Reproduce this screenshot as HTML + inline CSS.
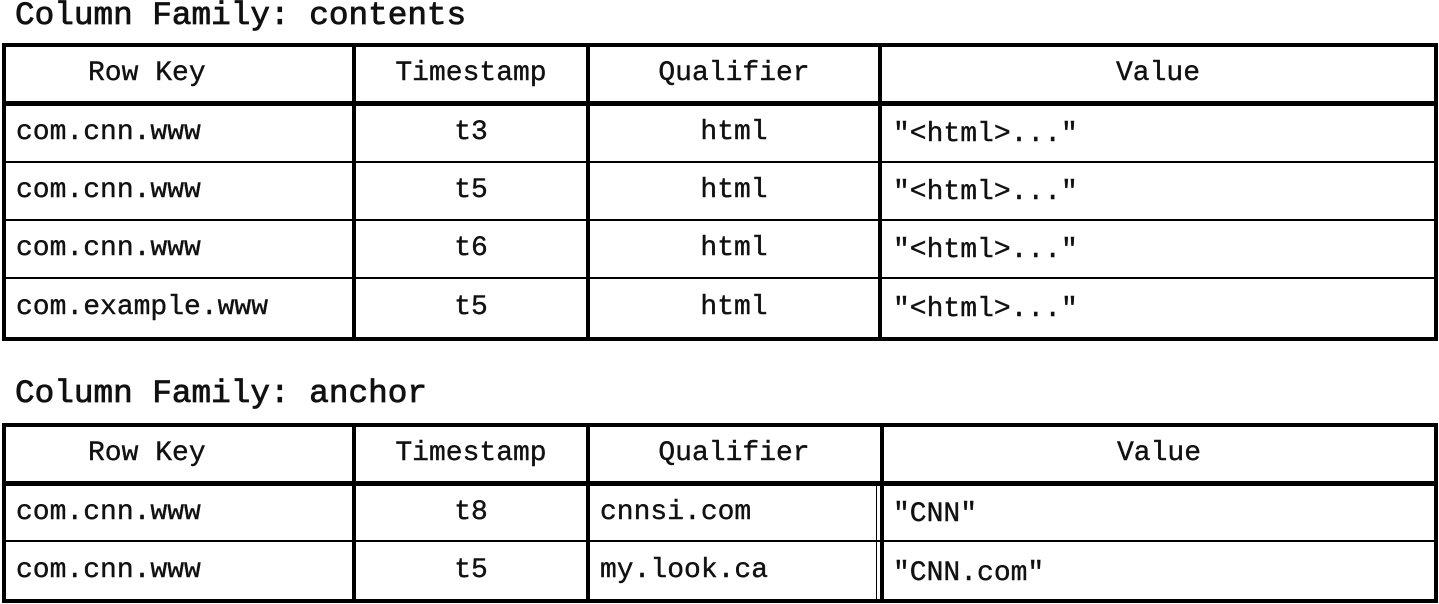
<!DOCTYPE html>
<html><head><meta charset="utf-8"><style>
body{margin:0;width:1439px;height:604px;background:#fff;position:relative;overflow:hidden;font-family:"Liberation Mono","DejaVu Sans Mono",monospace;color:#111}
.l{position:absolute;background:#000}
.t{position:absolute;font-size:28px;white-space:pre;line-height:1;-webkit-text-stroke:0.4px #111}
.h{position:absolute;font-size:32.7px;white-space:pre;line-height:1;-webkit-text-stroke:0.8px #111}
.c{text-align:center}
</style></head><body>
<div class="h" style="left:15px;top:0px">Column Family: contents</div>
<div class="h" style="left:15px;top:378px">Column Family: anchor</div>

<!-- table 1 -->
<div class="l" style="left:2px;top:43px;width:1436px;height:4px"></div>
<div class="l" style="left:2px;top:101px;width:1436px;height:5px"></div>
<div class="l" style="left:2px;top:161px;width:1436px;height:2px"></div>
<div class="l" style="left:2px;top:219px;width:1436px;height:2px"></div>
<div class="l" style="left:2px;top:277px;width:1436px;height:2px"></div>
<div class="l" style="left:2px;top:337px;width:1436px;height:4px"></div>
<div class="l" style="left:2px;top:43px;width:4px;height:298px"></div>
<div class="l" style="left:352px;top:43px;width:4px;height:298px"></div>
<div class="l" style="left:586px;top:43px;width:4px;height:298px"></div>
<div class="l" style="left:878px;top:43px;width:4px;height:298px"></div>
<div class="l" style="left:1434px;top:43px;width:4px;height:298px"></div>

<!-- table 2 -->
<div class="l" style="left:2px;top:423px;width:1436px;height:4px"></div>
<div class="l" style="left:2px;top:481px;width:1436px;height:5px"></div>
<div class="l" style="left:2px;top:540px;width:1436px;height:2px"></div>
<div class="l" style="left:2px;top:599px;width:1436px;height:4px"></div>
<div class="l" style="left:2px;top:423px;width:4px;height:180px"></div>
<div class="l" style="left:352px;top:423px;width:4px;height:180px"></div>
<div class="l" style="left:586px;top:423px;width:4px;height:180px"></div>
<div class="l" style="left:876px;top:486px;width:1px;height:115px"></div>
<div class="l" style="left:880px;top:423px;width:4px;height:180px"></div>
<div class="l" style="left:1434px;top:423px;width:4px;height:180px"></div>

<!-- table 1 text -->
<div class="t" style="left:88px;top:60px">Row Key</div>
<div class="t c" style="left:356px;width:230px;top:60px">Timestamp</div>
<div class="t c" style="left:590px;width:288px;top:60px">Qualifier</div>
<div class="t c" style="left:882px;width:552px;top:60px">Value</div>

<div class="t" style="left:16px;top:119px">com.cnn.www</div>
<div class="t c" style="left:356px;width:230px;top:119px">t3</div>
<div class="t c" style="left:590px;width:288px;top:119px">html</div>
<div class="t" style="left:893px;top:121px">"&lt;html&gt;..."</div>

<div class="t" style="left:16px;top:177px">com.cnn.www</div>
<div class="t c" style="left:356px;width:230px;top:177px">t5</div>
<div class="t c" style="left:590px;width:288px;top:177px">html</div>
<div class="t" style="left:893px;top:179px">"&lt;html&gt;..."</div>

<div class="t" style="left:16px;top:235px">com.cnn.www</div>
<div class="t c" style="left:356px;width:230px;top:235px">t6</div>
<div class="t c" style="left:590px;width:288px;top:235px">html</div>
<div class="t" style="left:893px;top:237px">"&lt;html&gt;..."</div>

<div class="t" style="left:16px;top:294px">com.example.www</div>
<div class="t c" style="left:356px;width:230px;top:294px">t5</div>
<div class="t c" style="left:590px;width:288px;top:294px">html</div>
<div class="t" style="left:893px;top:296px">"&lt;html&gt;..."</div>

<!-- table 2 text -->
<div class="t" style="left:88px;top:440px">Row Key</div>
<div class="t c" style="left:356px;width:230px;top:440px">Timestamp</div>
<div class="t c" style="left:590px;width:288px;top:440px">Qualifier</div>
<div class="t c" style="left:884px;width:550px;top:440px">Value</div>

<div class="t" style="left:16px;top:499px">com.cnn.www</div>
<div class="t c" style="left:356px;width:230px;top:499px">t8</div>
<div class="t" style="left:600px;top:499px">cnnsi.com</div>
<div class="t" style="left:893px;top:501px">"CNN"</div>

<div class="t" style="left:16px;top:557px">com.cnn.www</div>
<div class="t c" style="left:356px;width:230px;top:557px">t5</div>
<div class="t" style="left:600px;top:557px">my.look.ca</div>
<div class="t" style="left:893px;top:560px">"CNN.com"</div>
</body></html>
